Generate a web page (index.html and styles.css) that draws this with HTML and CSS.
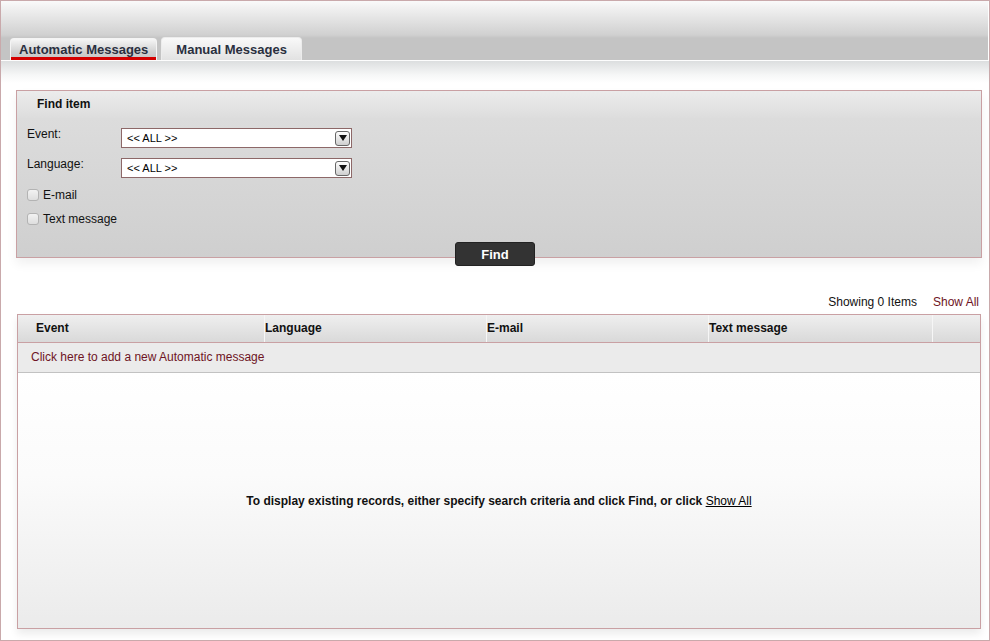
FILE: index.html
```html
<!DOCTYPE html>
<html>
<head>
    <title>Automatic Messages</title>
    <link rel="stylesheet" href="styles.css">
</head>
<body>
    <div class="frame">
        <!-- Tabs bar -->
        <div class="tabbar">
            <div class="tab tab-active">Automatic Messages</div>
            <div class="tab">Manual Messages</div>
        </div>

        <div class="content">
            <!-- Search panel -->
            <div class="find-panel">
                <div class="find-head">Find item</div>
                <div class="find-body">
                    <div class="field-row">
                        <label class="field-label">Event:</label>
                        <div class="select-box">
                            <span>&lt;&lt; ALL &gt;&gt;</span>
                            <span class="select-arrow">
                                <svg width="8" height="6" viewBox="0 0 8 6"><path d="M0 0 L8 0 L4 6 Z" fill="#111"/></svg>
                            </span>
                        </div>
                    </div>
                    <div class="field-row">
                        <label class="field-label">Language:</label>
                        <div class="select-box">
                            <span>&lt;&lt; ALL &gt;&gt;</span>
                            <span class="select-arrow">
                                <svg width="8" height="6" viewBox="0 0 8 6"><path d="M0 0 L8 0 L4 6 Z" fill="#111"/></svg>
                            </span>
                        </div>
                    </div>
                    <div class="check-row"><span class="check"></span>E-mail</div>
                    <div class="check-row"><span class="check"></span>Text message</div>
                    <button class="find-btn">Find</button>
                </div>
            </div>

            <div class="results-info">
                <span>Showing 0 Items</span>
                <a class="link-red" href="#">Show All</a>
            </div>

            <!-- Results grid -->
            <div class="grid">
                <div class="grid-head">
                    <div class="col col-first">Event</div>
                    <div class="col">Language</div>
                    <div class="col">E-mail</div>
                    <div class="col">Text message</div>
                    <div class="col"></div>
                </div>
                <div class="add-row"><a class="link-red" href="#">Click here to add a new Automatic message</a></div>
                <div class="grid-body">
                    <p class="empty-msg">To display existing records, either specify search criteria and click Find, or click <a href="#">Show All</a></p>
                </div>
            </div>
        </div>
    </div>
</body>
</html>
```

FILE: styles.css
```css
* {
    margin: 0;
    padding: 0;
    box-sizing: border-box;
}
body {
    font-family: 'Liberation Sans', Arial, sans-serif;
    font-size: 12px;
    color: #111;
    background-color: #fff;
}
.frame {
    width: 990px;
    height: 641px;
    border: 1px solid #c9a9ab;
    overflow: hidden;
}
/* Top bar with tabs */
.tabbar {
    height: 60px;
    margin-right: 1px;
    border-bottom: 1px solid #fdfdfd;
    background: linear-gradient(#fafafa 0px, #f2f2f2 6px, #d0d0d0 34px, #c4c4c4 37px, #c4c4c4 100%);
    display: flex;
    align-items: flex-end;
    padding-left: 9px;
    gap: 4px;
}
.tab {
    height: 23px;
    padding: 0 14px;
    font-size: 13px;
    font-weight: bold;
    color: #2a2f3f;
    line-height: 24px;
    border: 1px solid #ececec;
    border-bottom: none;
    border-radius: 4px 4px 0 0;
    background: linear-gradient(#f9f9f9, #e2e2e2);
}
.tab-active {
    height: 22px;
    padding: 0 8px;
    line-height: 22px;
    border-color: #f4f4f4;
    background: linear-gradient(#f6f6f6, #d2d2d2 60%, #c2c2c2);
    box-shadow: inset 0 -3px 0 #d40000;
}
.content {
    background: linear-gradient(#dcdedf 0px, #f6f7f7 14px, #fff 22px);
    height: 578px;
    padding: 29px 7px 0 15px;
}
/* Find item panel */
.find-panel {
    border: 1px solid #c9a0a3;
    box-shadow: 0 6px 10px rgba(0, 0, 0, 0.06);
}
.find-head {
    height: 27px;
    line-height: 26px;
    padding-left: 20px;
    font-weight: bold;
    background: linear-gradient(#ececec, #dddddd);
}
.find-body {
    height: 139px;
    padding: 10px 10px 0 10px;
    background: linear-gradient(#dcdcdc, #cfcfcf);
    display: flex;
    flex-direction: column;
}
.field-row {
    display: flex;
    margin-bottom: 10px;
}
.field-label {
    width: 94px;
    line-height: 13px;
}
.select-box {
    width: 231px;
    height: 20px;
    border: 1px solid #8d6868;
    background-color: #fff;
    display: flex;
    align-items: center;
    justify-content: space-between;
    padding: 0 1px 0 5px;
    font-size: 11px;
    color: #000;
}
.select-arrow {
    width: 15px;
    height: 15px;
    border: 1px solid #666;
    border-radius: 3px;
    background: linear-gradient(#fdfdfd, #cfcfcf);
    display: flex;
    align-items: center;
    justify-content: center;
}
.check-row {
    display: flex;
    align-items: center;
    height: 24px;
    margin-top: -5px;
}
.check-row + .check-row {
    margin-top: 0;
}
.check {
    width: 12px;
    height: 12px;
    border: 1px solid #b3b3b3;
    border-radius: 3px;
    background: linear-gradient(#f2f2f2, #dedede);
    margin-right: 4px;
}
.find-btn {
    align-self: center;
    margin-top: auto;
    margin-left: -8px;
    margin-bottom: -9px;
    width: 80px;
    height: 24px;
    border: 1px solid #222;
    border-radius: 3px;
    background-color: #333;
    color: #fff;
    font-family: 'Liberation Sans', Arial, sans-serif;
    font-size: 13px;
    font-weight: bold;
}
/* Result count */
.results-info {
    display: flex;
    justify-content: flex-end;
    gap: 16px;
    padding: 37px 3px 0 0;
    height: 56px;
    line-height: 14px;
}
a {
    color: #000;
}
.link-red {
    color: #6e1424;
    text-decoration: none;
}
/* Results grid */
.grid {
    margin: 0 1px 0 1px;
    height: 315px;
    border: 1px solid #c9a0a3;
    box-shadow: 0 5px 8px rgba(0, 0, 0, 0.08);
    display: flex;
    flex-direction: column;
}
.grid-head {
    display: grid;
    grid-template-columns: 246px 222px 222px 224px 1fr;
    height: 28px;
    border-bottom: 1px solid #c9a0a3;
    background: linear-gradient(#efefef, #d9d9d9);
    font-weight: bold;
}
.col {
    line-height: 27px;
    border-left: 1px solid #f6f6f6;
}
.col-first {
    border-left: none;
    padding-left: 18px;
}
.add-row {
    height: 30px;
    line-height: 29px;
    padding-left: 13px;
    background-color: #ebebeb;
    border-bottom: 1px solid #c2c2c2;
}
.grid-body {
    flex: 1;
    background: linear-gradient(#fff, #fbfbfb 40%, #ebebeb);
    display: flex;
    align-items: center;
    justify-content: center;
}
.empty-msg {
    font-weight: bold;
}
.empty-msg a {
    font-weight: normal;
}
```
